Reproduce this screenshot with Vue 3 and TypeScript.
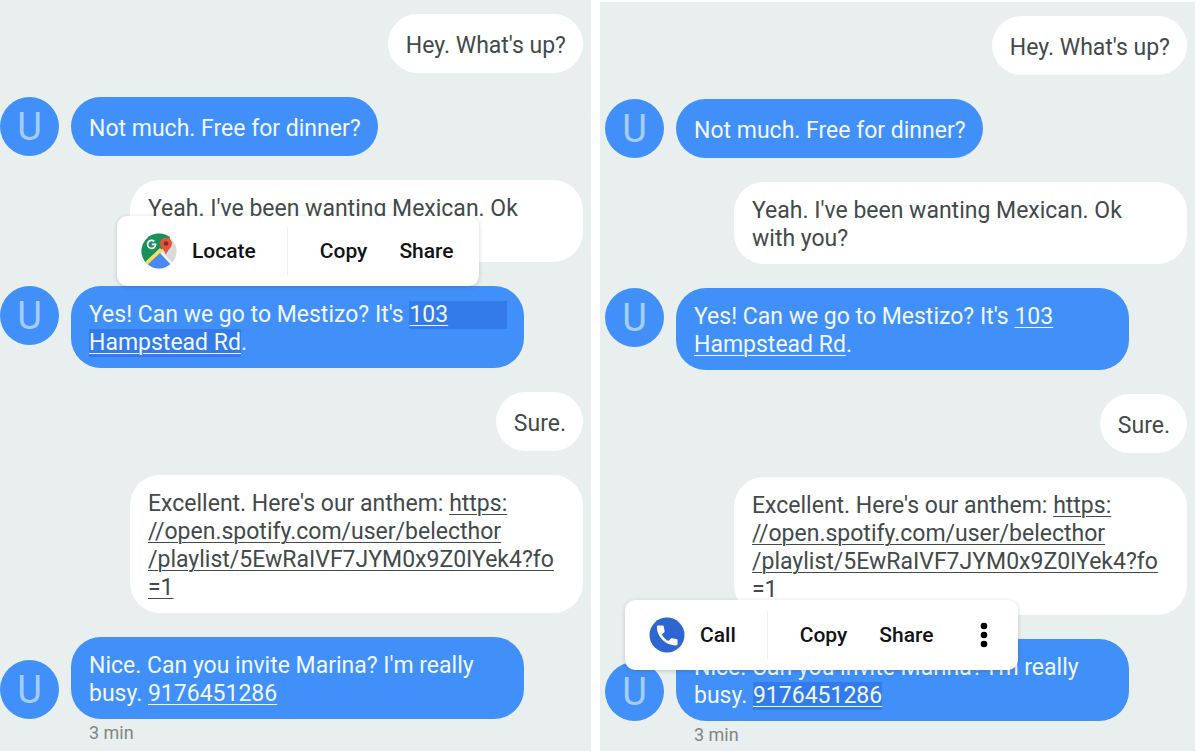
<script setup lang="ts">
interface Line {
  text?: string
  link?: string
  tail?: string
  fill?: boolean
}

interface Message {
  id: number
  mine: boolean
  wide?: boolean
  avatarEnd?: boolean
  href?: string
  time?: string
  lines: Line[]
}

interface Panel {
  name: string
  selected: number
  action: 'Locate' | 'Call'
}

const messages: Message[] = [
  { id: 1, mine: true, lines: [{ text: "Hey. What's up?" }] },
  { id: 2, mine: false, lines: [{ text: 'Not much. Free for dinner?' }] },
  {
    id: 3,
    mine: true,
    wide: true,
    lines: [{ text: "Yeah. I've been wanting Mexican. Ok" }, { text: 'with you?' }],
  },
  {
    id: 4,
    mine: false,
    wide: true,
    href: '#address',
    lines: [
      { text: "Yes! Can we go to Mestizo? It's ", link: '103', fill: true },
      { link: 'Hampstead Rd', tail: '.' },
    ],
  },
  { id: 5, mine: true, lines: [{ text: 'Sure.' }] },
  {
    id: 6,
    mine: true,
    wide: true,
    href: '#playlist',
    lines: [
      { text: "Excellent. Here's our anthem: ", link: 'https:' },
      { link: '//open.spotify.com/user/belecthor' },
      { link: '/playlist/5EwRaIVF7JYM0x9Z0IYek4?fo' },
      { link: '=1' },
    ],
  },
  {
    id: 7,
    mine: false,
    wide: true,
    avatarEnd: true,
    href: 'tel:9176451286',
    time: '3 min',
    lines: [{ text: "Nice. Can you invite Marina? I'm really" }, { text: 'busy. ', link: '9176451286' }],
  },
]

const panels: Panel[] = [
  { name: 'address', selected: 4, action: 'Locate' },
  { name: 'phone', selected: 7, action: 'Call' },
]
</script>

<template>
  <main class="screens">
    <section v-for="panel in panels" :key="panel.name" class="chat" :class="`chat-${panel.name}`">
      <div
        v-for="message in messages"
        :key="message.id"
        class="row"
        :class="{ mine: message.mine, 'avatar-end': message.avatarEnd }"
      >
        <div v-if="!message.mine" class="avatar">U</div>
        <div class="bubble" :class="{ wide: message.wide }">
          <div v-for="(line, index) in message.lines" :key="index" class="line">
            <span v-if="line.text">{{ line.text }}</span>
            <span
              v-if="line.link"
              :class="{
                selection: panel.selected === message.id,
                fill: line.fill,
              }"
            ><a :href="message.href">{{ line.link }}</a></span>
            <span v-if="line.tail">{{ line.tail }}</span>
          </div>
        </div>

        <div v-if="panel.selected === message.id" class="toolbar" role="toolbar">
          <button type="button" class="primary">
            <svg v-if="panel.action === 'Locate'" class="icon" viewBox="0 0 36 36" aria-hidden="true">
              <defs>
                <clipPath id="map-disc"><circle cx="18" cy="18" r="17.5" /></clipPath>
              </defs>
              <g clip-path="url(#map-disc)">
                <rect width="36" height="36" fill="#d9dadb" />
                <path d="M0 0H30L27 12L18 18L4 32H0Z" fill="#17905a" />
                <path d="M19 17L36 34V36H30L15 21Z" fill="#f4f5f5" />
                <path d="M2 31L19 15L22 18L6 34Z" fill="#f6df58" />
                <path d="M19 20L33 35V36H4V34Z" fill="#4a89f1" />
                <path d="M25 22C24 17 19 15 19 10.500A6 6 0 0 1 31 10.500C31 15 26 17 25 22Z" fill="#e4533c" />
                <circle cx="25" cy="10.500" r="2.300" fill="#8c2b20" />
                <path
                  d="M13.300 8.400A4 4 0 1 0 14.600 11.300H10.800"
                  fill="none"
                  stroke="#ffffff"
                  stroke-width="1.700"
                />
              </g>
            </svg>
            <svg v-else class="icon" viewBox="0 0 36 36" aria-hidden="true">
              <circle cx="18" cy="18" r="17.500" fill="#2d66d0" />
              <path
                d="M9 8.500H13.600C14.300 8.500 14.700 9 14.800 9.600C14.900 11.200 15.200 12.500 15.600 13.800C15.800 14.300 15.600 14.800 15.300 15.200L12.800 17.600C14.500 20.600 16.500 22.500 19.400 24L21.900 21.500C22.200 21.200 22.700 21.100 23.200 21.200C24.500 21.600 25.900 21.800 27.300 21.900C28 21.900 28.500 22.400 28.500 23.100V27.200C28.500 27.900 28 28.400 27.300 28.400C16.600 28.400 7.900 19.800 7.900 9.700C7.900 9 8.300 8.500 9 8.500Z"
                fill="#ffffff"
              />
            </svg>
            {{ panel.action }}
          </button>
          <button type="button" class="secondary">Copy</button>
          <button type="button" class="secondary">Share</button>
          <button v-if="panel.action === 'Call'" type="button" class="more" aria-label="More options">
            <svg viewBox="0 0 8 26" aria-hidden="true">
              <circle cx="4" cy="4" r="3.300" />
              <circle cx="4" cy="13" r="3.300" />
              <circle cx="4" cy="22" r="3.300" />
            </svg>
          </button>
        </div>

        <time v-if="message.time" class="time">{{ message.time }}</time>
      </div>
    </section>
  </main>
</template>

<style>
body {
  margin: 0;
  background: #ffffff;
}
</style>

<style scoped>
.screens {
  display: grid;
  grid-template-columns: 591fr 595fr;
  gap: 9px;
  padding: 0 5px 2px 0;
  font-family: Roboto, "Liberation Sans", sans-serif;
  font-size: 23px;
  line-height: 28px;
  color: #424a4a;
}

.chat {
  display: flex;
  flex-direction: column;
  gap: 24px;
  padding: 14px 8px 0 0;
  background: #e9efee;
}

.chat-phone {
  margin-top: 2px;
  padding-left: 5px;
}

.row {
  position: relative;
  display: grid;
  grid-template-columns: 59px auto;
  justify-content: start;
  align-items: start;
  column-gap: 12px;
}

.row.mine {
  display: flex;
  justify-content: flex-end;
}

.row.avatar-end {
  align-items: end;
}

.avatar {
  display: grid;
  place-items: center;
  height: 59px;
  border-radius: 50%;
  background: #418ff9;
  color: #a5cdfb;
  font-size: 38px;
}

.bubble {
  box-sizing: border-box;
  min-height: 59px;
  padding: 15px 17px 11px 18px;
  border-radius: 30px;
  background: #418ff9;
  color: #f1f8ff;
}

.mine .bubble {
  background: #ffffff;
  color: #424a4a;
}

.bubble:not(.wide) {
  padding-top: 18px;
}

.wide {
  width: 453px;
}

.line {
  display: flex;
  white-space: pre;
}

.bubble a {
  color: inherit;
  text-decoration: underline;
  text-decoration-thickness: 1px;
  text-underline-offset: 3px;
}

.selection {
  background: #347bea;
}

.selection.fill {
  flex: 1;
}

.toolbar {
  position: absolute;
  left: 117px;
  bottom: 100%;
  z-index: 1;
  display: flex;
  align-items: center;
  box-sizing: border-box;
  height: 70px;
  padding: 0 9px 0 24px;
  border-radius: 10px;
  background: #ffffff;
  box-shadow: 0 1px 4px rgba(40, 60, 60, 0.22);
}

.chat-phone .toolbar {
  left: 20px;
  top: -39px;
  bottom: auto;
}

.toolbar button {
  display: flex;
  align-items: center;
  height: 48px;
  padding: 0 16px;
  border: 0;
  background: none;
  color: #111414;
  font: inherit;
  font-size: 21px;
  font-weight: 500;
}

.toolbar .primary {
  gap: 15px;
  margin-right: 16px;
  padding: 0 31px 0 0;
  border-right: 1px solid #eef0f0;
}

.icon {
  width: 36px;
  height: 36px;
}

.toolbar .more {
  padding: 0 21px 0 30px;
}

.more svg {
  width: 8px;
  height: 26px;
}

.time {
  grid-column: 2;
  padding: 0 0 2px 18px;
  color: #7f8787;
  font-size: 18px;
}
</style>
